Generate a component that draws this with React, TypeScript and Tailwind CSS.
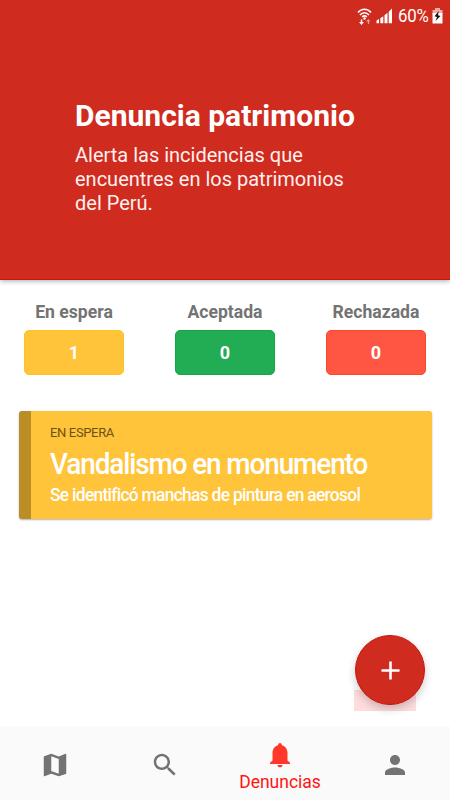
import React from "react";

const stats = [
  { label: "En espera", value: 1, tone: "bg-[#ffc439] border-[#ffc321]" },
  { label: "Aceptada", value: 0, tone: "bg-[#22ac53] border-[#12a846]" },
  { label: "Rechazada", value: 0, tone: "bg-[#ff5643] border-[#ff4526]" },
];

function Icon({ d, className }: { d: string; className: string }) {
  return (
    <svg viewBox="0 0 24 24" fill="currentColor" className={className}>
      <path d={d} />
    </svg>
  );
}

function StatusBar() {
  return (
    <div className="flex h-8 items-center justify-end pr-[8px] text-white">
      <svg width="15" height="17" viewBox="0 0 15 17" fill="none" stroke="white" className="mr-[4px]">
        <path d="M1 4.500C4.500.200 10.500.200 14 4.500M3 7c2.600-3 6.400-3 9 0M5.200 9c1.400-1.500 3.200-1.500 4.600 0" strokeWidth="1.6" />
        <circle cx="7.500" cy="10.500" r="1.200" fill="white" stroke="none" />
        <path d="M5.300 11.500v2.500H7L4.500 17 2 14h1.800v-2.500Z" fill="white" stroke="none" />
        <path d="M10.900 16v-2.500H9l2.300-2.500 2.300 2.500h-1.600v2.500Z" fill="#ef9d96" stroke="none" />
      </svg>
      <svg width="17" height="16" viewBox="0 0 17 16" fill="white" className="mr-[5px]">
        <path d="M.5 12.500L3 11v4.300H.5zM4.300 10.300l3-2V15.300h-3zM8.500 7.200l3-2.400v10.500h-3zM12.700 3.800L16 .5v14.800h-3.300z" />
      </svg>
      <span className="w-[30px] origin-left scale-x-[0.91] whitespace-nowrap text-[18.5px] leading-8 tracking-[-0.2px]">60%</span>
      <svg width="11" height="16" viewBox="0 0 11 16" className="relative left-[1px] ml-[3px]">
        <path d="M3 0h5v2h2.500v4H.5V2H3z" fill="#f2aaa5" />
        <path d="M.5 5h10v10.500H.5z" fill="white" />
        <path d="M6.800 3L2.500 8.200l2.500.8L3.500 13 8.500 8 6 7.200z" fill="#24110f" />
      </svg>
    </div>
  );
}

export default function App() {
  return (
    <div className="relative flex h-[800px] w-[450px] flex-col overflow-hidden bg-white font-[Roboto,sans-serif]">
      <header className="h-[280px] shrink-0 border-b border-[#c9140c] bg-[#cf2b1e] text-white shadow-[0_1px_5px_rgba(0,0,0,0.35)]">
        <StatusBar />
        <div className="pl-[75px] pt-[66px]">
          <h1 className="whitespace-nowrap text-[30px] font-bold leading-9">Denuncia patrimonio</h1>
          <p className="mt-[9px] w-[300px] text-[20px] leading-6 text-[#fff0ef]">
            Alerta las incidencias que<br />encuentres en los patrimonios<br />del Perú.
          </p>
        </div>
      </header>

      <section className="flex justify-between px-[24px] pt-[20px]">
        {stats.map(({ label, value, tone }) => (
          <div key={label} className="flex w-[100px] flex-col items-center">
            <span className="whitespace-nowrap text-[17.6px] font-bold leading-6 text-[#737373]">{label}</span>
            <div className={"mt-[6px] flex h-[45px] w-full items-center justify-center rounded-[5px] border text-[18px] font-bold text-white " + tone}>
              {value}
            </div>
          </div>
        ))}
      </section>

      <article className="ml-[19px] mt-[36px] h-[108px] w-[413px] overflow-hidden rounded-[3px] border-l-[12px] border-[#bb8d27] bg-[#ffc439] pl-[19px] shadow-[0_1px_2px_rgba(0,0,0,0.3)]">
        <p className="pt-[14px] text-[13px] leading-4 tracking-[-0.35px] text-[#6b521c]">EN ESPERA</p>
        <h2 className="mt-[5px] origin-left scale-x-[0.963] whitespace-nowrap text-[29px] font-medium leading-9 tracking-[-1.16px] text-white">Vandalismo en monumento</h2>
        <p className="mt-px origin-left scale-x-[0.965] whitespace-nowrap text-[18px] font-medium leading-6 tracking-[-0.72px] text-white">Se identificó manchas de pintura en aerosol</p>
      </article>

      <div className="absolute left-[354px] top-[690px] h-[21px] w-[62px] bg-[#ffdcde]" />
      <button aria-label="Agregar denuncia" className="absolute left-[355px] top-[635px] flex size-[70px] items-center justify-center rounded-full border border-[#c9140c] bg-[#cf2b1e] text-white shadow-[0_4px_9px_rgba(0,0,0,0.2)]">
        <Icon className="size-[31px]" d="M19 13h-6v6h-2v-6H5v-2h6V5h2v6h6v2z" />
      </button>

      <nav className="mt-auto flex h-[72px] bg-[#fafafa] pl-[1px] text-[#737373] shadow-[0_-1px_2px_rgba(0,0,0,0.04)]">
        <div className="flex w-[108px] items-center justify-center pt-[2px]">
          <Icon className="size-[30px]" d="M20.5 3l-.16.03L15 5.1 9 3 3.36 4.9c-.21.07-.36.25-.36.48V20.5c0 .28.22.5.5.5l.16-.03L9 18.9l6 2.1 5.640-1.900c.21-.070.360-.250.360-.480V3.500c0-.280-.220-.500-.500-.500zM15 19l-6-2.110V5l6 2.110V19z" />
        </div>
        <div className="flex w-[112px] items-center justify-center pt-[2px]">
          <Icon className="size-[30px]" d="M15.500 14h-.790l-.280-.270C15.410 12.590 16 11.110 16 9.500 16 5.910 13.090 3 9.500 3S3 5.910 3 9.500 5.910 16 9.500 16c1.610 0 3.090-.590 4.230-1.570l.270.280v.790l5 4.990L20.490 19l-4.990-5zm-6 0C7.010 14 5 11.990 5 9.500S7.010 5 9.500 5 14 7.010 14 9.500 11.990 14 9.500 14z" />
        </div>
        <div className="flex w-[118px] flex-col items-center pt-[12px] text-[#ff1511]">
          <svg viewBox="0 0 30 30" fill="#ff3829" className="size-[30px]">
            <path d="M12.500 25h5c0 1.500-1.100 2.300-2.500 2.300s-2.500-.800-2.500-2.300zM22.500 20.500v-7.300c0-3.800-2-7-5.600-7.900V4.900c0-1-.850-1.900-1.900-1.900s-1.900.900-1.900 1.900v.400c-3.600.900-5.600 4.100-5.600 7.900v7.300L5 22.800V24h20v-1.200z" />
          </svg>
          <span className="text-[17.5px] leading-6">Denuncias</span>
        </div>
        <div className="flex w-[111px] items-center justify-center pt-[2px]">
          <Icon className="size-[30px]" d="M12 12c2.210 0 4-1.790 4-4s-1.790-4-4-4-4 1.790-4 4 1.790 4 4 4zm0 2c-2.670 0-8 1.340-8 4v2h16v-2c0-2.660-5.330-4-8-4z" />
        </div>
      </nav>
    </div>
  );
}
